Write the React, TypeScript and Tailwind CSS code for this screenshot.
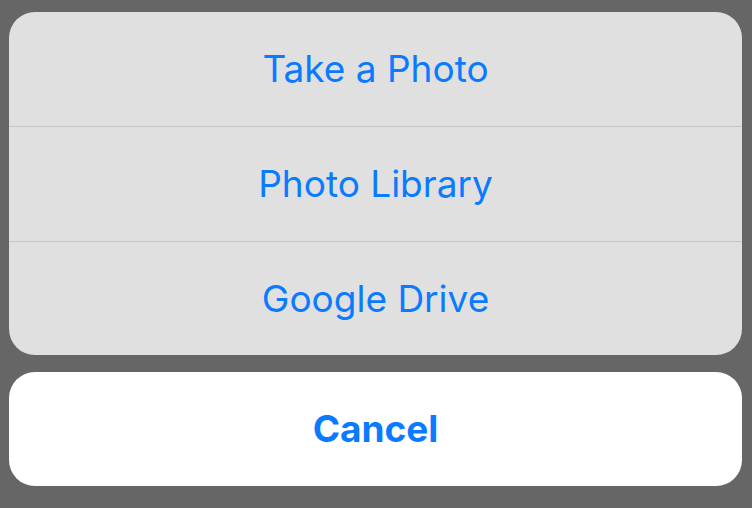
export default function App() {
  const options = ['Take a Photo', 'Photo Library', 'Google Drive'];

  return (
    <div
      className="h-[508px] w-[752px] bg-[#666666] pl-[9px] pr-[10px] pt-[12px]"
      style={{ fontFamily: 'Inter, "Liberation Sans", sans-serif' }}
    >
      <div className="overflow-hidden rounded-[26px] bg-[#e0e0e0]">
        {options.map((label, i) => (
          <div
            key={label}
            className={
              i < options.length - 1
                ? 'flex h-[115px] items-center justify-center border-b border-[#c6c6c6] text-[37px] text-[#0a7bff]'
                : 'flex h-[113px] items-center justify-center text-[37px] text-[#0a7bff]'
            }
          >
            {label}
          </div>
        ))}
      </div>
      <div className="mt-[17px] flex h-[114px] items-center justify-center rounded-[26px] bg-white text-[37px] font-bold text-[#0a7bff]">
        Cancel
      </div>
    </div>
  );
}
